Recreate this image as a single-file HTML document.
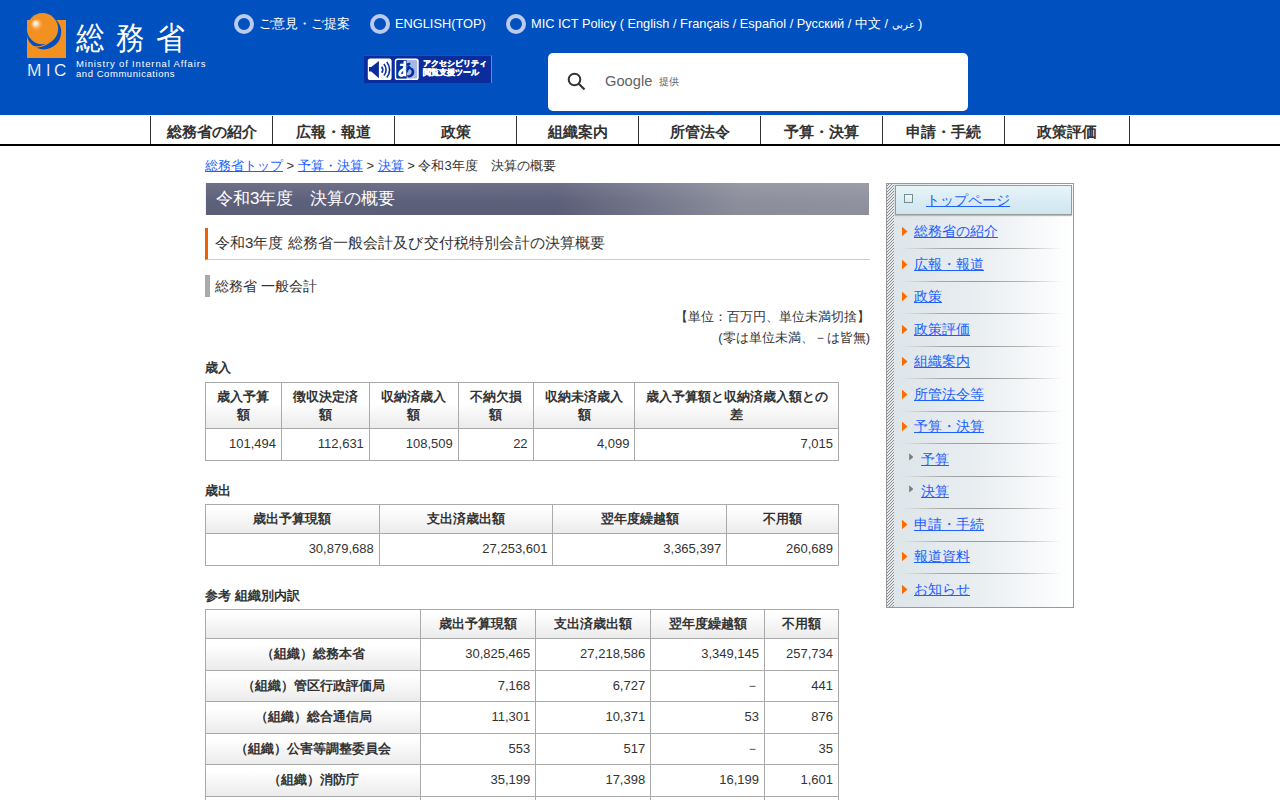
<!DOCTYPE html>
<html lang="ja"><head><meta charset="utf-8"><title>令和3年度　決算の概要</title>
<style>
*{box-sizing:border-box}
html,body{margin:0;padding:0;background:#fff;width:1280px;height:800px;overflow:hidden}
body{font-family:"Liberation Sans",sans-serif;color:#333;font-size:13px;position:relative}
.abs{position:absolute}
#hdr{position:absolute;left:0;top:0;width:1280px;height:115px;background:#0050c0}
.tl{position:absolute;top:14px;height:20px;line-height:20px;color:#fff;font-size:12.8px;white-space:nowrap}
.ring{position:absolute;top:14px;width:20px;height:20px;border-radius:50%;border:4.25px solid #bccbec}
#search{position:absolute;left:548px;top:53px;width:420px;height:58px;background:#fff;border-radius:5px}
#nav{position:absolute;left:0;top:115px;width:1280px;height:31px;border-bottom:2px solid #000}
#nav div{position:absolute;top:1px;height:28px;line-height:32px;text-align:center;font-weight:bold;font-size:15.2px;color:#333;border-left:1px solid #333}
a{color:#1c60ff;text-decoration:underline}
#crumb{position:absolute;left:205px;top:156px;line-height:20px;font-size:13px;color:#333;white-space:nowrap}
#title{position:absolute;left:206px;top:183px;width:663px;height:32px;background:linear-gradient(rgba(255,255,255,0.1),rgba(255,255,255,0) 60%,rgba(0,0,0,0.02)),linear-gradient(102deg,#5d6079 0%,#5c5f79 53%,#8c8e9c 80%,#90929f 100%);color:#fff;font-size:17px;line-height:32px;padding-left:10px;box-shadow:-1px 0 0 #f4f4f6}
#h3{position:absolute;left:205px;top:228px;width:665px;height:32px;border-left:3px solid #f06000;border-bottom:1px solid #ccc;font-size:15px;line-height:30px;padding-left:7px;color:#333}
#h4{position:absolute;left:205px;top:275px;height:22px;border-left:5px solid #aaa;font-size:14px;line-height:22px;padding-left:5px;color:#333;white-space:nowrap}
.unit{position:absolute;right:410px;font-size:13px;line-height:21px;text-align:right;white-space:nowrap}
.cap{position:absolute;left:205px;font-weight:bold;font-size:13px;line-height:18px;color:#333;white-space:nowrap}
table{position:absolute;left:205px;border-collapse:collapse;font-size:13px;color:#333}
th,td{border:1px solid #aaa;padding:0 5px;line-height:17px}
th{background:#fff linear-gradient(#fff,#ebebeb) left bottom/100% 25px no-repeat;font-weight:bold;text-align:center;color:#333}
td{text-align:right;background:#fff;padding-right:5px;padding-bottom:2px}
.r th{padding-bottom:2px}
.h2 th{line-height:18px;padding-top:1px}
#side{position:absolute;left:886px;top:183px;width:188px;height:425px;border:1px solid #999;background:linear-gradient(90deg,#dce5e9 0%,#e8edf0 45%,#fff 100%)}
#hatch{position:absolute;left:0;top:0;width:7px;height:423px;background:repeating-linear-gradient(135deg,#e4eaee 0 1.2px,#8c8c8c 1.2px 2.12px)}
#top{position:absolute;left:8px;top:1px;width:177px;height:30px;border:1px solid #999;background:linear-gradient(#e8f5f7,#d8eaf4 60%,#cfe7ec);box-shadow:0 1px 1px #bbb}
.si{position:absolute;left:0;width:187px;height:32px;font-size:14px;line-height:20px;white-space:nowrap}
.si a{position:absolute;left:27px;top:5px}
.tri{position:absolute;left:15px;top:10.8px;width:5.5px;height:9.5px;background:#ff6a00;clip-path:polygon(0 0,100% 50%,0 100%)}
.sep{position:absolute;left:15px;width:160px;height:1px;background:linear-gradient(90deg,rgba(160,160,160,0),#a6a6a6 25%,#9a9a9a 50%,#b4b4b4 75%,rgba(190,190,190,0))}
</style></head><body>
<div id="hdr">
  <!-- logo -->
  <svg class="abs" style="left:0;top:0" width="80" height="80" viewBox="0 0 80 80">
    <defs><radialGradient id="hl" cx="0.5" cy="0.5" r="0.5" fx="0.38" fy="0.35"><stop offset="0" stop-color="#fffaf2"/><stop offset="0.3" stop-color="#fde3c2"/><stop offset="1" stop-color="#f39022" stop-opacity="0"/></radialGradient></defs>
    <rect x="27" y="20" width="39" height="38" fill="#f39022"/>
    <circle cx="43.8" cy="32" r="17.4" fill="#0050c0"/>
    <path d="M30.5 46 Q 39 49 48.5 43" fill="none" stroke="#f39022" stroke-width="1.25"/>
    <circle cx="42.5" cy="28.7" r="15.6" fill="#f39022"/>
    <circle cx="36.8" cy="24.8" r="7" fill="url(#hl)"/>
  </svg>
  <div class="abs" style="left:27px;top:61px;color:#fff;font-size:15.8px;line-height:19px;white-space:nowrap;-webkit-text-stroke:0.2px #0050c0"><span class="abs" style="left:0;transform:scaleX(1.1);transform-origin:0 0">M</span><span class="abs" style="left:19px">I</span><span class="abs" style="left:26.5px;transform:scaleX(1.08);transform-origin:0 0">C</span></div>
  <div class="abs" style="left:76px;top:18px;color:#fff;font-size:29px;line-height:36px;letter-spacing:11px;white-space:nowrap;transform:scaleY(1.12);transform-origin:0 0">総務省</div>
  <div class="abs" style="left:76px;top:58.5px;color:#fff;font-size:9.5px;line-height:10px;letter-spacing:0.85px;white-space:nowrap">Ministry of Internal Affairs</div><div class="abs" style="left:76px;top:68.5px;color:#fff;font-size:9.5px;line-height:10px;letter-spacing:0.55px;white-space:nowrap">and Communications</div>

<div class="ring" style="left:234px"></div><div class="tl" style="left:259px">ご意見・ご提案</div>
  <div class="ring" style="left:370px"></div><div class="tl" style="left:395px">ENGLISH(TOP)</div>
  <div class="ring" style="left:506px"></div><div class="tl" style="left:531px">MIC ICT Policy ( English / Français / Español / Русский / 中文 / <span style="font-size:9.6px">عربي</span> )</div>

  <!-- accessibility button -->
  <div class="abs" style="left:364px;top:55px;width:128px;height:28px;background:#0a2c9c;border-top:1px solid #2a4cb0;border-right:1px solid #6f86cc"></div>
  <svg class="abs" style="left:364px;top:55px" width="60" height="28" viewBox="364 55 60 28">
    <rect x="367.8" y="58.6" width="23.8" height="21.4" rx="2.6" fill="#fff"/>
    <path d="M369 67 L371.3 67 L378.9 61 L378.9 78.3 L371.3 71.5 L369 71.5 Z" fill="#0a2c9c"/>
    <path d="M381.76 66.72 A5.2 5.2 0 0 1 381.76 72.68" stroke="#0a2c9c" stroke-width="1.6" fill="none"/>
    <path d="M383.89 63.95 A8.6 8.6 0 0 1 383.89 75.45" stroke="#0a2c9c" stroke-width="1.6" fill="none"/>
    <path d="M386.77 61.92 A12.1 12.1 0 0 1 386.77 77.48" stroke="#0a2c9c" stroke-width="1.6" fill="none"/>
    <rect x="394.8" y="58.6" width="23.9" height="21.4" rx="2.6" fill="#fff"/>
    <rect x="396.3" y="60" width="20.9" height="18.6" rx="1.5" fill="#a9b7e2"/>
    <path d="M397.8 60 H406.6 V78.6 H397.8 A1.5 1.5 0 0 1 396.3 77.1 V61.5 A1.5 1.5 0 0 1 397.8 60 Z" fill="#0a2c9c"/>
    <rect x="397.5" y="61.2" width="19" height="16.4" fill="none" stroke="#fff" stroke-width="0.6" opacity="0"/>
  </svg>
  <div class="abs" style="left:396px;top:59px;width:21px;height:20px;overflow:hidden">
    <div class="abs" style="left:0;top:0;width:21px;height:20px;color:#fff;font-weight:bold;font-size:17px;line-height:20px;text-align:center;-webkit-text-stroke:0.5px #fff;clip-path:inset(0 10.5px 0 0)">あ</div>
    <div class="abs" style="left:0;top:0;width:21px;height:20px;color:#0a2c9c;font-weight:bold;font-size:17px;line-height:20px;text-align:center;-webkit-text-stroke:0.5px #0a2c9c;clip-path:inset(0 0 0 10.5px)">あ</div>
  </div>
  <div class="abs" style="left:423px;top:59px;color:#fff;font-weight:bold;font-size:8.3px;line-height:9px;white-space:nowrap;-webkit-text-stroke:0.35px #fff">アクセシビリティ<br>閲覧支援ツール</div>

  <div id="search">
    <svg class="abs" style="left:18px;top:18px" width="22" height="22" viewBox="0 0 22 22">
      <circle cx="8.5" cy="8.5" r="5.8" fill="none" stroke="#333" stroke-width="2"/>
      <path d="M12.8 12.8 L18.5 18.5" stroke="#333" stroke-width="2.2"/>
    </svg>
    <div class="abs" style="left:57px;top:18.5px;font-size:14.7px;line-height:18px;color:#5f6368;white-space:nowrap">Google <span style="font-size:9.6px;position:relative;top:-0.5px;left:2.5px">提供</span></div>
  </div>
</div>

<div id="nav">
  <div style="left:150px;width:122px">総務省の紹介</div>
  <div style="left:272px;width:122px">広報・報道</div>
  <div style="left:394px;width:122px">政策</div>
  <div style="left:516px;width:122px">組織案内</div>
  <div style="left:638px;width:122px">所管法令</div>
  <div style="left:760px;width:122px">予算・決算</div>
  <div style="left:882px;width:122px">申請・手続</div>
  <div style="left:1004px;width:126px;border-right:1px solid #333">政策評価</div>
</div>

<div id="crumb"><a href="#">総務省トップ</a> &gt; <a href="#">予算・決算</a> &gt; <a href="#">決算</a> &gt; 令和3年度　決算の概要</div>

<div id="title">令和3年度　決算の概要</div>
<div id="h3">令和3年度 総務省一般会計及<span style="letter-spacing:1.4px">び</span><span style="letter-spacing:0.1px">交付税特別会計の決算概要</span></div>
<div id="h4">総務省 一般会計</div>
<div class="unit" style="top:306px">【単位：百万円、単位未満切捨】</div>
<div class="unit" style="top:327px">(零は単位未満、－は皆無)</div>

<div class="cap" style="top:359px">歳入</div>
<table style="top:382px;width:634px">
  <colgroup><col style="width:76px"><col style="width:88px"><col style="width:89px"><col style="width:75px"><col style="width:102px"><col style="width:204px"></colgroup>
  <tr class="h2" style="height:46px"><th>歳入予算<br>額</th><th>徴収決定済<br>額</th><th>収納済歳入<br>額</th><th>不納欠損<br>額</th><th>収納未済歳入<br>額</th><th>歳入予算額と収納済歳入額との<br>差</th></tr>
  <tr style="height:32px"><td>101,494</td><td>112,631</td><td>108,509</td><td>22</td><td>4,099</td><td>7,015</td></tr>
</table>

<div class="cap" style="top:482px">歳出</div>
<table style="top:504px;width:634px">
  <colgroup><col style="width:174px"><col style="width:174px"><col style="width:174px"><col style="width:112px"></colgroup>
  <tr class="r" style="height:29px"><th>歳出予算現額</th><th>支出済歳出額</th><th>翌年度繰越額</th><th>不用額</th></tr>
  <tr style="height:32px"><td>30,879,688</td><td>27,253,601</td><td>3,365,397</td><td>260,689</td></tr>
</table>

<div class="cap" style="top:587px">参考 組織別内訳</div>
<table style="top:609px;width:634px">
  <colgroup><col style="width:216px"><col style="width:115px"><col style="width:115px"><col style="width:114px"><col style="width:74px"></colgroup>
  <tr class="r" style="height:29px"><th></th><th>歳出予算現額</th><th>支出済歳出額</th><th>翌年度繰越額</th><th>不用額</th></tr>
  <tr class="r" style="height:32px"><th>（組織）総務本省</th><td>30,825,465</td><td>27,218,586</td><td>3,349,145</td><td>257,734</td></tr>
  <tr class="r" style="height:31px"><th>（組織）管区行政評価局</th><td>7,168</td><td>6,727</td><td>－</td><td>441</td></tr>
  <tr class="r" style="height:32px"><th>（組織）総合通信局</th><td>11,301</td><td>10,371</td><td>53</td><td>876</td></tr>
  <tr class="r" style="height:31px"><th>（組織）公害等調整委員会</th><td>553</td><td>517</td><td>－</td><td>35</td></tr>
  <tr class="r" style="height:32px"><th>（組織）消防庁</th><td>35,199</td><td>17,398</td><td>16,199</td><td>1,601</td></tr>
  <tr class="r" style="height:31px"><th>（組織）統計局</th><td>0</td><td>0</td><td>0</td><td>0</td></tr>
</table>

<div id="side">
  <div id="hatch"></div>
  <div id="top">
    <div class="abs" style="left:8px;top:8px;width:9px;height:9px;border:1.3px solid #6f8f96;background:linear-gradient(#f4f8f9,#dfe9ec)"></div>
    <a class="abs" href="#" style="left:30px;top:4px;font-size:14px;line-height:20px">トップページ</a>
  </div>
  <div class="si" style="top:32px"><span class="tri"></span><a href="#">総務省の紹介</a></div>
  <div class="sep" style="top:64px"></div>
  <div class="si" style="top:65px"><span class="tri"></span><a href="#">広報・報道</a></div>
  <div class="sep" style="top:97px"></div>
  <div class="si" style="top:97px"><span class="tri"></span><a href="#">政策</a></div>
  <div class="sep" style="top:129px"></div>
  <div class="si" style="top:130px"><span class="tri"></span><a href="#">政策評価</a></div>
  <div class="sep" style="top:162px"></div>
  <div class="si" style="top:162px"><span class="tri"></span><a href="#">組織案内</a></div>
  <div class="sep" style="top:194px"></div>
  <div class="si" style="top:195px"><span class="tri"></span><a href="#">所管法令等</a></div>
  <div class="sep" style="top:227px"></div>
  <div class="si" style="top:227px"><span class="tri"></span><a href="#">予算・決算</a></div>
  <div class="sep" style="top:259px"></div>
  <div class="si" style="top:260px"><span class="tri" style="left:22.2px;top:9.2px;width:4.2px;height:7.4px;background:#7a7a7a"></span><a href="#" style="left:34px">予算</a></div>
  <div class="sep" style="top:292px"></div>
  <div class="si" style="top:292px"><span class="tri" style="left:22.2px;top:9.2px;width:4.2px;height:7.4px;background:#7a7a7a"></span><a href="#" style="left:34px">決算</a></div>
  <div class="sep" style="top:324px"></div>
  <div class="si" style="top:325px"><span class="tri"></span><a href="#">申請・手続</a></div>
  <div class="sep" style="top:357px"></div>
  <div class="si" style="top:357px"><span class="tri"></span><a href="#">報道資料</a></div>
  <div class="sep" style="top:389px"></div>
  <div class="si" style="top:390px"><span class="tri"></span><a href="#">お知らせ</a></div>
</div>
</body></html>
